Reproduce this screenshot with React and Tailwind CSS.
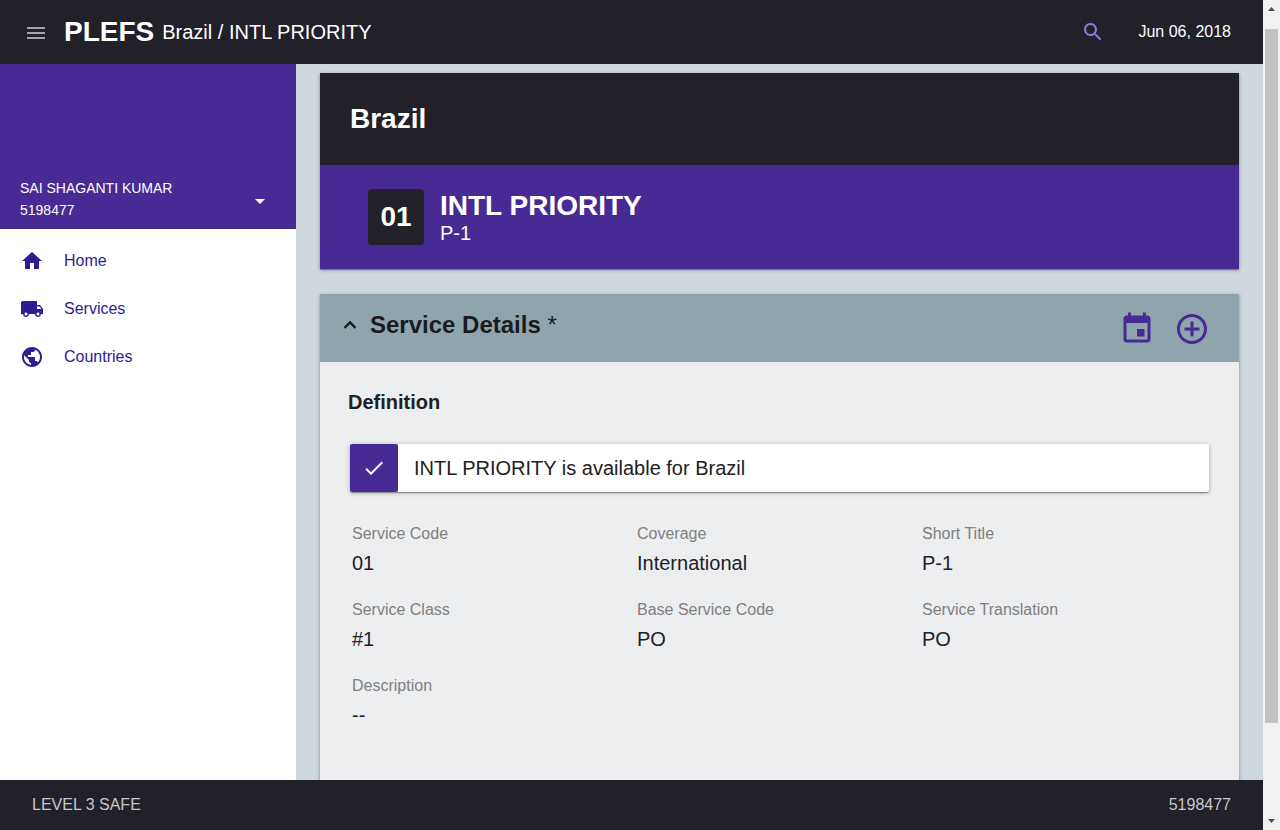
import React from "react";

const PATHS = {
  menu: "M3 18h18v-2H3v2zm0-5h18v-2H3v2zm0-7v2h18V6H3z",
  search:
    "M15.5 14h-.79l-.28-.27C15.41 12.59 16 11.11 16 9.5 16 5.91 13.09 3 9.5 3S3 5.91 3 9.5 5.91 16 9.5 16c1.61 0 3.09-.59 4.23-1.57l.27.28v.79l5 4.99L20.49 19l-4.99-5zm-6 0C7.01 14 5 11.99 5 9.5S7.01 5 9.5 5 14 7.01 14 9.5 11.99 14 9.5 14z",
  home: "M10 20v-6h4v6h5v-8h3L12 3 2 12h3v8z",
  truck:
    "M20 8h-3V4H3c-1.1 0-2 .9-2 2v11h2c0 1.66 1.34 3 3 3s3-1.34 3-3h6c0 1.66 1.34 3 3 3s3-1.34 3-3h2v-5l-3-4zM6 18.5c-.83 0-1.5-.67-1.5-1.5s.67-1.5 1.5-1.5 1.5.67 1.5 1.5-.67 1.5-1.5 1.5zm13.5-9l1.96 2.5H17V9.5h2.5zm-1.5 9c-.83 0-1.5-.67-1.5-1.5s.67-1.5 1.5-1.5 1.5.67 1.5 1.5-.67 1.5-1.5 1.5z",
  globe:
    "M12 2C6.48 2 2 6.48 2 12s4.48 10 10 10 10-4.48 10-10S17.52 2 12 2zm-1 17.93c-3.95-.49-7-3.85-7-7.93 0-.62.08-1.21.21-1.79L9 15v1c0 1.1.9 2 2 2v1.93zm6.9-2.54c-.26-.81-1-1.39-1.9-1.39h-1v-3c0-.55-.45-1-1-1H8v-2h2c.55 0 1-.45 1-1V7h2c1.1 0 2-.9 2-2v-.41c2.93 1.19 5 4.06 5 7.41 0 2.08-.8 3.97-2.1 5.39z",
  caret: "M7 10l5 5 5-5z",
  up: "M12 8l-6 6 1.41 1.41L12 10.83l4.59 4.58L18 14z",
  check: "M9 16.17L4.83 12l-1.42 1.41L9 19 21 7l-1.41-1.41z",
  event:
    "M17 12h-5v5h5v-5zM16 1v2H8V1H6v2H5c-1.11 0-1.99.9-1.99 2L3 19c0 1.1.89 2 2 2h14c1.1 0 2-.9 2-2V5c0-1.1-.9-2-2-2h-1V1h-2zm3 18H5V8h14v11z",
  add: "M13 7h-2v4H7v2h4v4h2v-4h4v-2h-4V7zm-1-5C6.48 2 2 6.48 2 12s4.48 10 10 10 10-4.48 10-10S17.52 2 12 2zm0 18c-4.41 0-8-3.59-8-8s3.59-8 8-8 8 3.59 8 8-3.59 8-8 8z",
};

function Icon({ name, className }) {
  return (
    <svg viewBox="0 0 24 24" fill="currentColor" className={`shrink-0 ${className}`}>
      <path d={PATHS[name]} />
    </svg>
  );
}

const NAV = [
  ["home", "Home"],
  ["truck", "Services"],
  ["globe", "Countries"],
];

const FIELDS = [
  ["Service Code", "01"],
  ["Coverage", "International"],
  ["Short Title", "P-1"],
  ["Service Class", "#1"],
  ["Base Service Code", "PO"],
  ["Service Translation", "PO"],
  ["Description", "--"],
];

const SHADOW =
  "shadow-[0_1px_4px_0_rgba(0,0,0,0.3),0_1px_1px_0_rgba(0,0,0,0.2),0_2px_1px_-1px_rgba(0,0,0,0.12)]";

function Header() {
  return (
    <header className="flex h-16 shrink-0 items-center bg-[#222029] pr-8 pl-6 text-white">
      <Icon name="menu" className="mt-0.5 size-6 text-[#a5a5a9]" />
      <h1 className="ml-4 text-[28px] leading-8 font-bold">PLEFS</h1>
      <span className="ml-2 text-xl leading-6">Brazil / INTL PRIORITY</span>
      <Icon name="search" className="ml-auto size-6 text-[#8d79d6]" />
      <span className="ml-[33px] text-base">Jun 06, 2018</span>
    </header>
  );
}

function Sidebar() {
  return (
    <aside className="flex w-[296px] shrink-0 flex-col bg-white">
      <div className="flex h-[165px] items-end justify-between bg-[#472a93] pr-6 pb-2 pl-5 text-sm text-white">
        <div className="leading-[22px]">
          <div>SAI SHAGANTI KUMAR</div>
          <div>5198477</div>
        </div>
        <Icon name="caret" className="mb-2 size-6" />
      </div>
      <nav className="flex flex-col pt-2">
        {NAV.map(([icon, label]) => (
          <a key={label} className="flex h-12 items-center gap-5 pl-5 text-base text-[#311b92]">
            <Icon name={icon} className="size-6" />
            <span>{label}</span>
          </a>
        ))}
      </nav>
    </aside>
  );
}

function ServiceBanner() {
  return (
    <section className={`flex shrink-0 flex-col text-white ${SHADOW}`}>
      <div className="flex h-[92px] items-center bg-[#222029] px-[30px]">
        <h2 className="text-[28px] leading-8 font-bold">Brazil</h2>
      </div>
      <div className="flex h-[104px] items-center gap-4 bg-[#472a93] px-12">
        <div className="flex size-14 items-center justify-center rounded bg-[#222029] text-[28px] font-bold">01</div>
        <div className="flex flex-col">
          <span className="text-[28px] leading-8 font-bold">INTL PRIORITY</span>
          <span className="mt-[-1px] text-xl leading-6">P-1</span>
        </div>
      </div>
    </section>
  );
}

function ServiceDetails() {
  return (
    <section className={`mt-[25px] flex h-[560px] shrink-0 flex-col bg-[#edeef0] text-[#212121] ${SHADOW}`}>
      <div className="flex h-[68px] shrink-0 items-center bg-[#90a4ad] pr-[29px] pl-[18px] text-[#1b1b1f]">
        <Icon name="up" className="mt-[-6px] size-6 stroke-current stroke-[0.6]" />
        <h3 className="mt-[-6px] ml-2 text-2xl font-bold">
          Service Details <span className="font-normal">*</span>
        </h3>
        <div className="ml-auto flex items-center gap-[19px] text-[#472a93]">
          <Icon name="event" className="mt-0.5 size-9" />
          <Icon name="add" className="mt-0.5 size-9" />
        </div>
      </div>
      <div className="flex flex-col px-[30px] pt-7">
        <h4 className="ml-[-2px] text-xl leading-6 font-bold">Definition</h4>
        <div className={`mt-[30px] flex h-12 items-center rounded-[2px] bg-white ${SHADOW}`}>
          <div className="flex size-12 items-center justify-center rounded-[2px] bg-[#472a93] text-white">
            <Icon name="check" className="size-6" />
          </div>
          <span className="ml-4 text-xl">INTL PRIORITY is available for Brazil</span>
        </div>
        <dl className="mt-[33px] grid w-[857px] grid-cols-3 gap-y-6 pl-0.5">
          {FIELDS.map(([label, value]) => (
            <div key={label} className="flex h-[52px] flex-col">
              <dt className="text-base leading-[18px] text-[#808080]">{label}</dt>
              <dd className="mt-[7px] text-xl leading-[26px] text-[#222029]">{value}</dd>
            </div>
          ))}
        </dl>
      </div>
    </section>
  );
}

function Scrollbar() {
  return (
    <div className="flex w-[17px] shrink-0 flex-col items-center justify-between bg-[#f1f1f1]">
      <svg viewBox="0 0 17 17" className="size-[17px] shrink-0" fill="#505050">
        <path d="M5 11h7L8.5 7z" />
      </svg>
      <div className="mt-3 h-[694px] w-[13px] bg-[#c1c1c1]" />
      <svg viewBox="0 0 17 17" className="mt-auto size-[17px] shrink-0" fill="#505050">
        <path d="M5 6h7L8.5 10z" />
      </svg>
    </div>
  );
}

export default function App() {
  return (
    <div className="flex h-[830px] w-[1280px] overflow-hidden font-['Liberation_Sans',Arial,sans-serif]">
      <div className="flex min-w-0 flex-1 flex-col">
        <Header />
        <div className="flex min-h-0 flex-1 overflow-hidden bg-[#cfd8df]">
          <Sidebar />
          <main className="flex min-w-0 flex-1 flex-col overflow-hidden pt-[9px] pr-6 pl-6">
            <ServiceBanner />
            <ServiceDetails />
          </main>
        </div>
        <footer className="flex h-[50px] shrink-0 items-center justify-between bg-[#222029] px-8 text-base text-[#c8c8ca]">
          <span>LEVEL 3 SAFE</span>
          <span>5198477</span>
        </footer>
      </div>
      <Scrollbar />
    </div>
  );
}
